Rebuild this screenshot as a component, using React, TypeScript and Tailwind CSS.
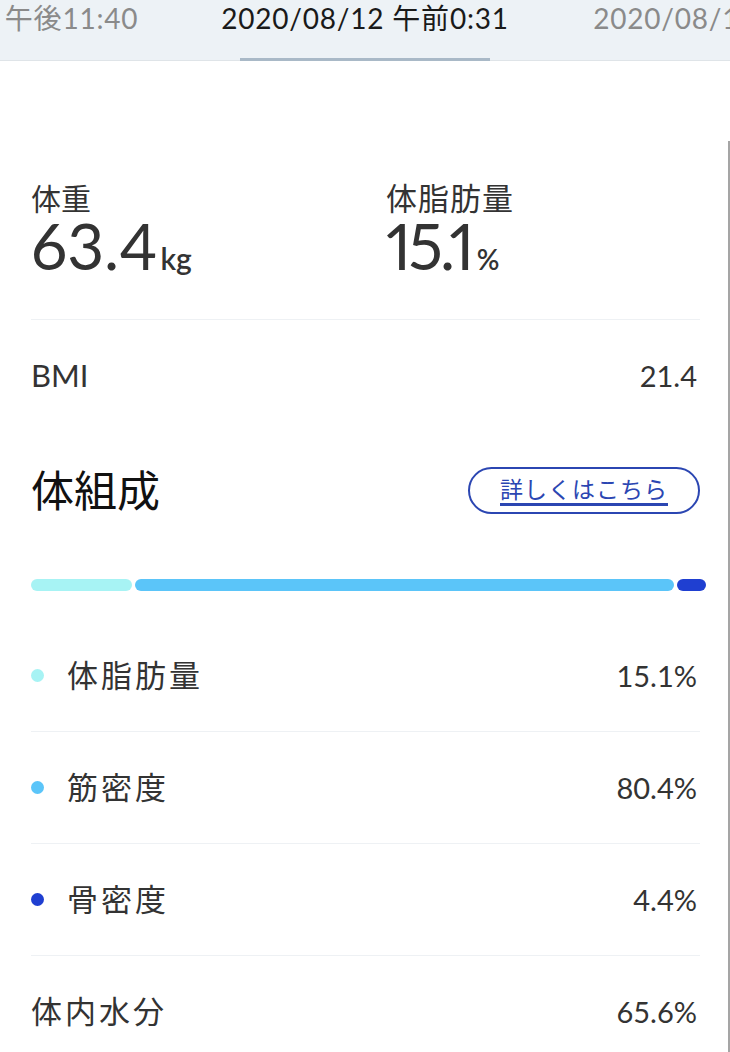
import React from "react";

const FONT = { fontFamily: 'Lato, "Noto Sans CJK JP", sans-serif' };

function Row({ dot, label, value }: { dot?: string; label: string; value: string }) {
  return (
    <div className="flex h-[111px] items-center justify-between">
      <div className="flex items-center">
        {dot && <div className="mr-[23px] h-[13px] w-[13px] shrink-0 rounded-full" style={{ backgroundColor: dot }} />}
        <span className="text-[31px] leading-none tracking-[3px] text-[#333]">{label}</span>
      </div>
      <span className="mr-[3px] text-[29px] leading-none text-[#333]">{value}</span>
    </div>
  );
}

export default function App() {
  return (
    <div className="relative h-[1052px] w-[730px] overflow-hidden bg-white" style={FONT}>
      {/* header tabs */}
      <div className="relative h-[61px] border-b border-[#dfe4e8] bg-[#edf2f6]">
        <div className="flex h-[60px] w-[1110px] -translate-x-[190px] items-start justify-between pt-[3px]">
          <div className="flex w-[370px] justify-center pr-[18px]">
            <span className="whitespace-nowrap text-[28px] leading-[30px] tracking-[0.8px] text-[#8a8a8a]">2020/08/10 午後11:40</span>
          </div>
          <div className="flex w-[370px] justify-center">
            <span className="whitespace-nowrap text-[28px] leading-[30px] tracking-[0.8px] text-[#1a1a1a]">2020/08/12 午前0:31</span>
          </div>
          <div className="flex w-[370px] justify-center pl-[4px]">
            <span className="whitespace-nowrap text-[28px] leading-[30px] tracking-[0.8px] text-[#8a8a8a]">2020/08/13 午前7:02</span>
          </div>
        </div>
        <div className="absolute bottom-[-1px] left-[240px] h-[3px] w-[250px] bg-[#a9b9c7]" />
      </div>

      {/* scrollbar */}
      <div className="absolute right-0 top-[141px] h-[911px] w-[2px] bg-[#a5a5a5]" />

      <div className="pl-[31px] pr-[30px]">
        {/* main values */}
        <div className="flex pt-[119px]">
          <div className="w-[355px]">
            <div className="text-[30px] leading-[36px] text-[#333]">体重</div>
            <div className="flex items-baseline text-[#333]">
              <span className="text-[64px] leading-[60px] proportional-nums">63.4</span>
              <span className="ml-[3px] text-[30px] font-semibold leading-none">kg</span>
            </div>
          </div>
          <div>
            <div className="text-[31px] leading-[36px] tracking-[1px] text-[#333]">体脂肪量</div>
            <div className="flex items-baseline text-[#333]">
              <span className="text-[64px] leading-[60px] tracking-[-3px] proportional-nums">15.1</span>
              <span className="ml-[5px] text-[28px] font-semibold leading-none">%</span>
            </div>
          </div>
        </div>

        <div className="mt-[43px] h-[1px] bg-[#eef1f4]" />

        {/* BMI */}
        <div className="flex h-[110px] items-center justify-between">
          <span className="text-[31px] leading-none text-[#333]">BMI</span>
          <span className="mr-[3px] text-[29px] leading-none text-[#333]">21.4</span>
        </div>

        {/* 体組成 */}
        <div className="mt-[37px] flex items-center justify-between">
          <span className="text-[43px] leading-none text-[#111]">体組成</span>
          <button className="flex h-[47px] w-[232px] items-center justify-center rounded-full border-2 border-[#2b46b2] bg-white">
            <span className="border-b-[3px] border-[#2b46b2] pb-[1px] text-[23px] leading-[26px] tracking-[1px] text-[#2b46b2]">詳しくはこちら</span>
          </button>
        </div>

        {/* bar */}
        <div className="mt-[65px] flex h-[12px] w-[675px] gap-[3px]">
          <div className="h-full w-[101px] rounded-full bg-[#a7f3f4]" />
          <div className="h-full flex-1 rounded-full bg-[#5bc5f9]" />
          <div className="h-full w-[29px] rounded-full bg-[#1f3fd1]" />
        </div>

        {/* list */}
        <div className="mt-[29px]">
          <Row dot="#a7f3f4" label="体脂肪量" value="15.1%" />
          <div className="h-[1px] bg-[#eef1f4]" />
          <Row dot="#5bc5f9" label="筋密度" value="80.4%" />
          <div className="h-[1px] bg-[#eef1f4]" />
          <Row dot="#1f3fd1" label="骨密度" value="4.4%" />
          <div className="h-[1px] bg-[#eef1f4]" />
          <Row label="体内水分" value="65.6%" />
        </div>
      </div>
    </div>
  );
}
